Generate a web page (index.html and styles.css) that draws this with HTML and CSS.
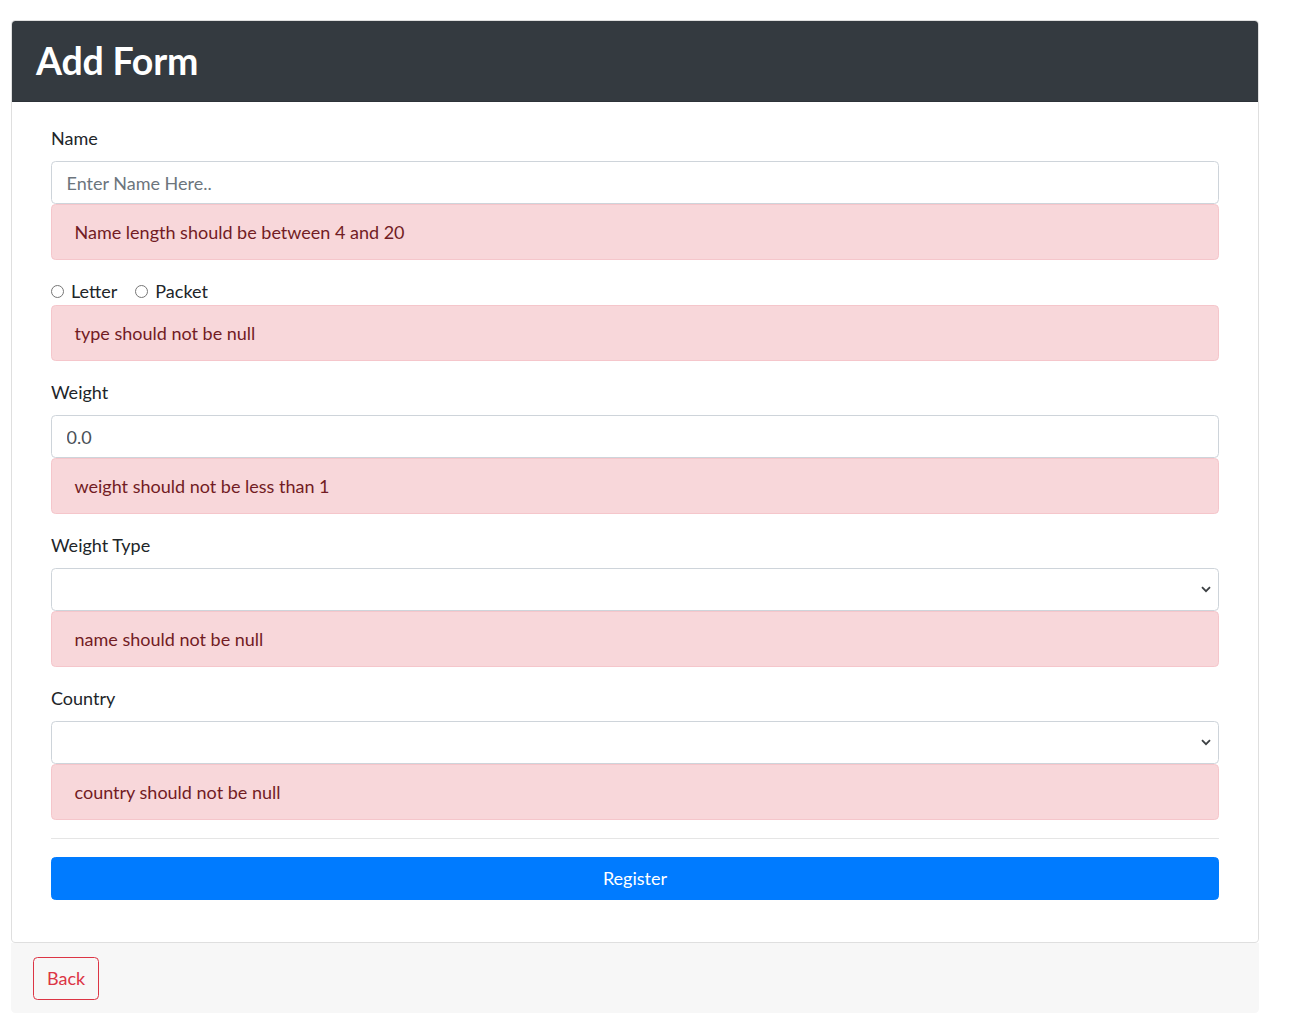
FILE: index.html
```html
<!DOCTYPE html>
<html lang="en">
<head>
<meta charset="utf-8">
<title>Add Form</title>
<link rel="stylesheet" href="styles.css">
</head>
<body>
<div class="page">
  <div class="card">
    <div class="card-header">
      <h1 class="title">Add Form</h1>
    </div>
    <form class="card-body">
      <div class="form-group">
        <label class="label" for="name">Name</label>
        <input class="form-control" id="name" type="text" placeholder="Enter Name Here..">
        <div class="alert">Name length should be between 4 and 20</div>
      </div>
      <div class="form-group">
        <div class="radio-row">
          <label class="radio"><input type="radio" name="type" value="Letter"><span>Letter</span></label>
          <label class="radio"><input type="radio" name="type" value="Packet"><span>Packet</span></label>
        </div>
        <div class="alert">type should not be null</div>
      </div>
      <div class="form-group">
        <label class="label" for="weight">Weight</label>
        <input class="form-control" id="weight" type="text" value="0.0">
        <div class="alert">weight should not be less than 1</div>
      </div>
      <div class="form-group">
        <label class="label" for="wtype">Weight Type</label>
        <div class="select-wrap">
          <select class="form-control select" id="wtype"><option></option></select>
          <svg class="chev" width="10" height="7" viewBox="0 0 10 7"><path d="M1 1.2 L5 5.2 L9 1.2" fill="none" stroke="#3c4043" stroke-width="1.8"/></svg>
        </div>
        <div class="alert">name should not be null</div>
      </div>
      <div class="form-group last">
        <label class="label" for="country">Country</label>
        <div class="select-wrap">
          <select class="form-control select" id="country"><option></option></select>
          <svg class="chev" width="10" height="7" viewBox="0 0 10 7"><path d="M1 1.2 L5 5.2 L9 1.2" fill="none" stroke="#3c4043" stroke-width="1.8"/></svg>
        </div>
        <div class="alert">country should not be null</div>
      </div>
      <hr class="divider">
      <button class="btn-primary" type="button">Register</button>
    </form>
  </div>
  <div class="footer">
    <button class="btn-back" type="button">Back</button>
  </div>
</div>
</body>
</html>
```
FILE: styles.css
```css
html, body {
  margin: 0;
  padding: 0;
  background: #fff;
}
body {
  font-family: Lato, "Open Sans", "Liberation Sans", sans-serif;
  font-size: 18px;
  line-height: 27px;
  color: #212529;
}
.page {
  padding: 20px 0 0 11px;
  width: 1248px;
}
.card {
  border: 1px solid rgba(0, 0, 0, 0.125);
  border-radius: 4.5px;
  background: #fff;
  overflow: hidden;
}
.card-header {
  background: #343a40;
  padding: 13px 23px 14px 24px;
  border-bottom: 1px solid rgba(0, 0, 0, 0.125);
}
.title {
  margin: 0;
  font-size: 37.5px;
  line-height: 53px;
  font-weight: 700;
  letter-spacing: -0.2px;
  color: #fff;
}
.card-body {
  display: flex;
  flex-direction: column;
  padding: 23px 39px 42px;
}
.form-group {
  display: flex;
  flex-direction: column;
  margin-bottom: 18px;
}
.form-group.last {
  margin-bottom: 0;
}
.label {
  display: block;
  margin-bottom: 9px;
}
.form-control {
  box-sizing: border-box;
  display: block;
  width: 100%;
  height: 43px;
  margin: 0;
  padding: 6.75px 14.5px;
  font: inherit;
  color: #495057;
  background: #fff;
  border: 1px solid #ced4da;
  border-radius: 4.5px;
  outline: none;
}
.form-control::placeholder {
  color: #6c757d;
  opacity: 1;
}
.select-wrap {
  position: relative;
}
.select {
  appearance: none;
  -webkit-appearance: none;
}
.chev {
  position: absolute;
  right: 8px;
  top: 18px;
  pointer-events: none;
}
.alert {
  padding: 13.5px 22.5px;
  color: #721c24;
  background: #f8d7da;
  border: 1px solid #f5c6cb;
  border-radius: 4.5px;
}
.radio-row {
  display: flex;
  gap: 18px;
  height: 27px;
  align-items: center;
}
.radio {
  display: flex;
  align-items: center;
  gap: 7px;
}
.radio input {
  margin: 0;
  width: 13px;
  height: 13px;
}
.divider {
  margin: 18px 0;
  border: 0;
  border-top: 1px solid rgba(0, 0, 0, 0.1);
  height: 0;
}
.btn-primary {
  display: block;
  width: 100%;
  height: 43px;
  padding: 0;
  font: inherit;
  color: #fff;
  background: #007bff;
  border: 1px solid #007bff;
  border-radius: 4.5px;
}
.footer {
  background: #f7f7f7;
  padding: 13.5px 22px;
  border-radius: 0 0 4.5px 4.5px;
}
.btn-back {
  display: block;
  height: 43px;
  padding: 0 13px;
  font: inherit;
  color: #dc3545;
  background: transparent;
  border: 1px solid #dc3545;
  border-radius: 4.5px;
}
```
